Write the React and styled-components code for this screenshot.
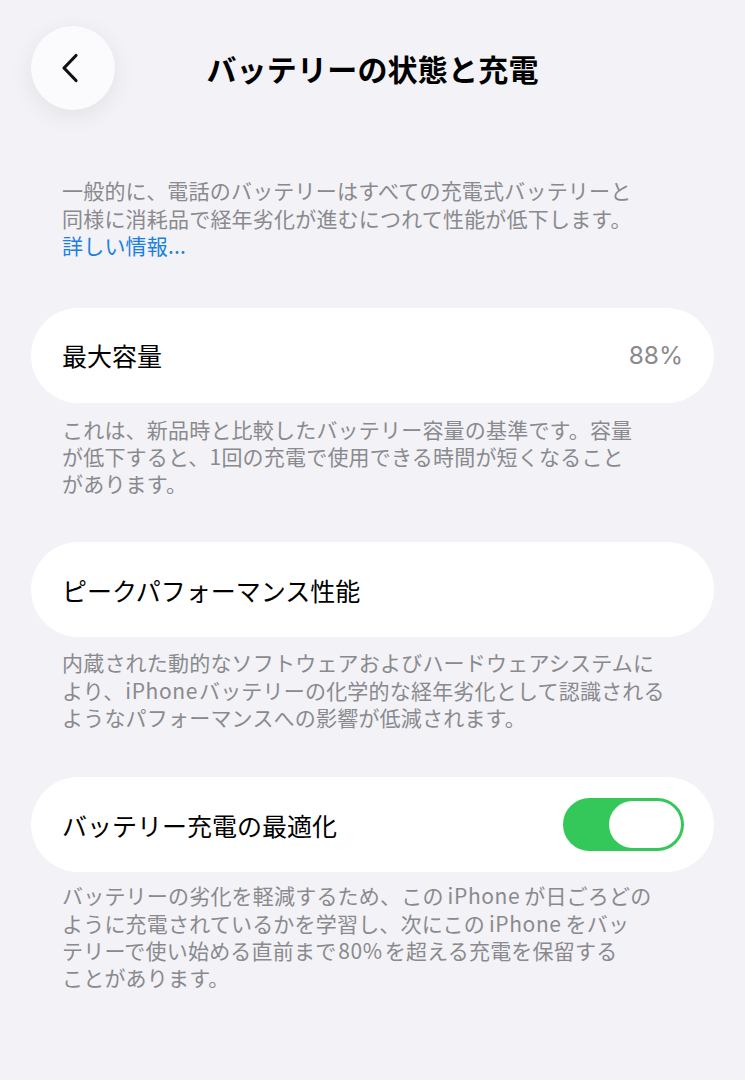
import React from "react";
import styled, { createGlobalStyle } from "styled-components";

const Global = createGlobalStyle`
  html, body { margin: 0; padding: 0; background: #f2f2f7; }
  body {
    font-family: "Noto Sans CJK JP", "Noto Sans", "Liberation Sans", sans-serif;
    -webkit-font-smoothing: antialiased;
  }
`;

const Page = styled.div`
  width: 745px;
  min-height: 1080px;
  background: #f2f2f7;
  box-sizing: border-box;
  padding-bottom: 40px;
`;

const Header = styled.header`
  display: grid;
  grid-template-columns: 1fr auto 1fr;
  align-items: center;
  padding-top: 26px;
  height: 84px;
`;

const BackButton = styled.button`
  justify-self: start;
  margin-left: 31px;
  width: 84px;
  height: 84px;
  border-radius: 50%;
  border: none;
  background: #fbfbfd;
  box-shadow: 0 6px 24px rgba(0, 0, 0, 0.07);
  display: flex;
  align-items: center;
  justify-content: center;
  padding: 0;
  padding-right: 6px;
`;

const Title = styled.h1`
  margin: 0;
  font-size: 30px;
  font-weight: 700;
  color: #000;
  letter-spacing: 0.2px;
`;

const Content = styled.main`
  display: flex;
  flex-direction: column;
  padding: 0 31px;
`;

const Note = styled.p`
  margin: ${(p) => p.$mt || 0}px 0 0;
  padding: 0 31px;
  font-size: 21px;
  line-height: ${(p) => p.$lh || 27.3}px;
  color: #8a8a8e;
  letter-spacing: 0.2px;
`;

const Latin = styled.span`
  letter-spacing: 0.6px;
  margin: 0 ${(p) => p.$gap || 0}px;
`;

const Link = styled.a`
  color: #1a7fe3;
  text-decoration: none;
`;

const Card = styled.div`
  margin-top: ${(p) => p.$mt}px;
  height: 95px;
  border-radius: 48px;
  background: #ffffff;
  display: flex;
  align-items: center;
  justify-content: space-between;
  padding: 0 30px 0 31px;
`;

const Label = styled.span`
  font-size: 25px;
  color: #000;
`;

const Value = styled.span`
  font-size: 24.5px;
  color: #8a8a8e;
  font-family: "Inter", "Noto Sans", sans-serif;
  padding-right: 1px;
`;

const Toggle = styled.div`
  width: 121px;
  height: 53px;
  border-radius: 27px;
  background: #34c759;
  display: flex;
  align-items: center;
  justify-content: flex-end;
  padding: 0 3px;
  box-sizing: border-box;
`;

const Knob = styled.div`
  width: 72px;
  height: 47px;
  border-radius: 24px;
  background: #fff;
`;

export default function App() {
  return (
    <Page>
      <Global />
      <Header>
        <BackButton aria-label="戻る">
          <svg width="22" height="30" viewBox="0 0 22 30" fill="none">
            <path d="M17 2.5 L5 15 L17 27.5" stroke="#111" strokeWidth="3.2" strokeLinecap="round" strokeLinejoin="round" />
          </svg>
        </BackButton>
        <Title>バッテリーの状態と充電</Title>
        <div />
      </Header>
      <Content>
        <Note $mt={67} $lh={27.5}>
          一般的に、電話のバッテリーはすべての充電式バッテリーと<br />
          同様に消耗品で経年劣化が進むにつれて性能が低下します。<br />
          <Link href="#">詳しい情報...</Link>
        </Note>
        <Card $mt={48}>
          <Label>最大容量</Label>
          <Value>88%</Value>
        </Card>
        <Note $mt={13}>
          これは、新品時と比較したバッテリー容量の基準です。容量<br />
          が低下すると、1回の充電で使用できる時間が短くなること<br />
          があります。
        </Note>
        <Card $mt={45}>
          <Label>ピークパフォーマンス性能</Label>
        </Card>
        <Note $mt={12}>
          内蔵された動的なソフトウェアおよびハードウェアシステムに<br />
          より、<Latin $gap={1}>iPhone</Latin>バッテリーの化学的な経年劣化として認識される<br />
          ようなパフォーマンスへの影響が低減されます。
        </Note>
        <Card $mt={46}>
          <Label>バッテリー充電の最適化</Label>
          <Toggle>
            <Knob />
          </Toggle>
        </Card>
        <Note $mt={10}>
          バッテリーの劣化を軽減するため、この<Latin $gap={4}>iPhone</Latin>が日ごろどの<br />
          ように充電されているかを学習し、次にこの<Latin $gap={4}>iPhone</Latin>をバッ<br />
          テリーで使い始める直前まで<Latin $gap={2}>80%</Latin>を超える充電を保留する<br />
          ことがあります。
        </Note>
      </Content>
    </Page>
  );
}
